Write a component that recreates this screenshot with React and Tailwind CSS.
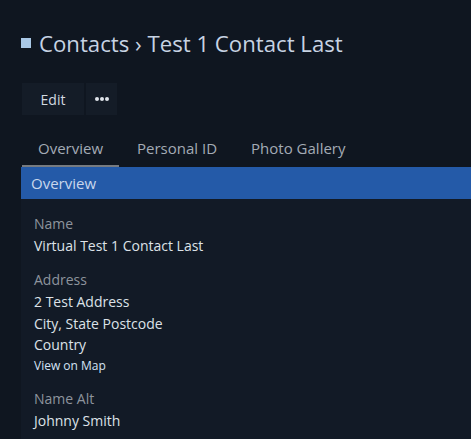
import { useState } from 'react';

const tabs = ['Overview', 'Personal ID', 'Photo Gallery'];

const Field = ({ label, children }) => (
  <div className="mb-3">
    <div className="text-[14px] leading-[22px] text-[#8d949d]">{label}</div>
    {children}
  </div>
);

const App = () => {
  const [active, setActive] = useState(0);

  return (
    <div
      className="min-h-[439px] w-[471px] overflow-hidden bg-[#0f1620] pl-[21px] pt-[28px]"
      style={{ fontFamily: '"Open Sans", sans-serif' }}
    >
      {/* Heading */}
      <div className="flex items-center gap-[8px] text-[22.2px] leading-[32px] text-[#c7d3e3]">
        <span className="mt-[-3px] h-[10px] w-[10px] bg-[#a9c8e6]" />
        <h1>Contacts › Test 1 Contact Last</h1>
      </div>

      {/* Actions */}
      <div className="mt-[23px] flex gap-[2px] pl-[1px]">
        <button className="h-[32px] w-[62px] bg-[#141c27] text-[14px] text-[#d3d9e0]">
          Edit
        </button>
        <button className="flex h-[32px] w-[31px] items-center justify-center gap-[1px] bg-[#141c27]">
          <span className="h-[4px] w-[4px] rounded-full bg-[#dfe4ea]" />
          <span className="h-[4px] w-[4px] rounded-full bg-[#dfe4ea]" />
          <span className="h-[4px] w-[4px] rounded-full bg-[#dfe4ea]" />
        </button>
      </div>

      {/* Tabs */}
      <div className="mt-[17px] flex gap-[2px] pl-[1px]">
        {tabs.map((tab, i) => (
          <button
            key={tab}
            onClick={() => setActive(i)}
            className={`h-[35px] border-b-2 px-[16px] text-[15px] text-[#a3abb5] ${
              active === i ? 'border-[#777b80]' : 'border-transparent'
            }`}
          >
            {tab}
          </button>
        ))}
      </div>

      {/* Panel */}
      <div className="bg-[#121a26]">
        <div className="h-[32px] bg-[#245aa8] pl-[10px] text-[15px] leading-[32px] text-[#c9d7ec]">
          Overview
        </div>
        <div className="px-[13px] pt-[14px] pb-[8px] text-[14px] leading-[22px] text-[#dde2e8]">
          <Field label="Name">
            <div>Virtual Test 1 Contact Last</div>
          </Field>
          <Field label="Address">
            <div>2 Test Address</div>
            <div className="leading-[21px]">City, State Postcode</div>
            <div className="leading-[21px]">Country</div>
            <a href="#" className="block text-[12px] leading-[21px] text-[#d5e3f5]">
              View on Map
            </a>
          </Field>
          <Field label="Name Alt">
            <div>Johnny Smith</div>
          </Field>
        </div>
      </div>
    </div>
  );
};

export default App;
